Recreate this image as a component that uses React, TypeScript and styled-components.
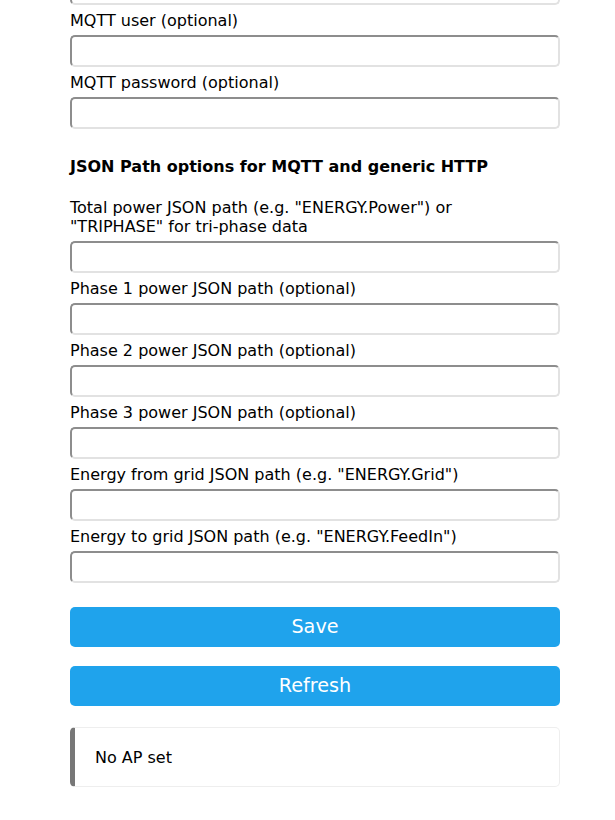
import React from "react";
import styled, { createGlobalStyle } from "styled-components";

const Global = createGlobalStyle`
  html, body { margin: 0; padding: 0; background: #fff; }
  body {
    font-family: "DejaVu Sans", Verdana, sans-serif;
    font-size: 16px;
    color: #000;
  }
`;

const Wrap = styled.div`
  width: 490px;
  margin: -32px 0 0 70px;
  display: flex;
  flex-direction: column;
`;

const Field = styled.div`
  display: flex;
  flex-direction: column;
`;

const Label = styled.label`
  display: block;
  line-height: 19px;
  padding-top: 1px;
`;

const Input = styled.input`
  box-sizing: border-box;
  width: 100%;
  height: 32px;
  margin: 5px 0;
  padding: 5px;
  font-family: inherit;
  font-size: 16px;
  border-radius: 5px;
  border-style: solid;
  border-width: 2px;
  border-top-color: #8d8d8d;
  border-left-color: #8d8d8d;
  border-bottom-color: #e2e2e2;
  border-right-color: #e2e2e2;
  background: #fff;
  outline: none;
`;

const Heading = styled.div`
  font-weight: bold;
  line-height: 19px;
  margin: 23px 0 21px;
`;

const Button = styled.button`
  box-sizing: border-box;
  width: 100%;
  height: 40px;
  margin-top: 19px;
  border: 0;
  border-radius: 5px;
  background: #1fa3ec;
  color: #fff;
  font-family: inherit;
  font-size: 19.2px;
  line-height: 40px;
  padding: 0;
  cursor: pointer;
`;

const Msg = styled.div`
  box-sizing: border-box;
  margin-top: 21px;
  height: 60px;
  padding: 20px;
  border: 1px solid #eee;
  border-left: 5px solid #777;
  border-radius: 5px;
  line-height: 19px;
`;

const topFields = ["MQTT user (optional)", "MQTT password (optional)"];
const jsonFields: React.ReactNode[] = [
  <>
    Total power JSON path (e.g. "ENERGY.Power") or
    <br />
    "TRIPHASE" for tri-phase data
  </>,
  "Phase 1 power JSON path (optional)",
  "Phase 2 power JSON path (optional)",
  "Phase 3 power JSON path (optional)",
  'Energy from grid JSON path (e.g. "ENERGY.Grid")',
  'Energy to grid JSON path (e.g. "ENERGY.FeedIn")',
];

export default function App() {
  return (
    <>
      <Global />
      <Wrap>
        <Input type="text" />
        {topFields.map((l) => (
          <Field key={l}>
            <Label>{l}</Label>
            <Input type="text" />
          </Field>
        ))}
        <Heading>JSON Path options for MQTT and generic HTTP</Heading>
        {jsonFields.map((l, i) => (
          <Field key={i}>
            <Label>{l}</Label>
            <Input type="text" />
          </Field>
        ))}
        <Button>Save</Button>
        <Button>Refresh</Button>
        <Msg>No AP set</Msg>
      </Wrap>
    </>
  );
}
